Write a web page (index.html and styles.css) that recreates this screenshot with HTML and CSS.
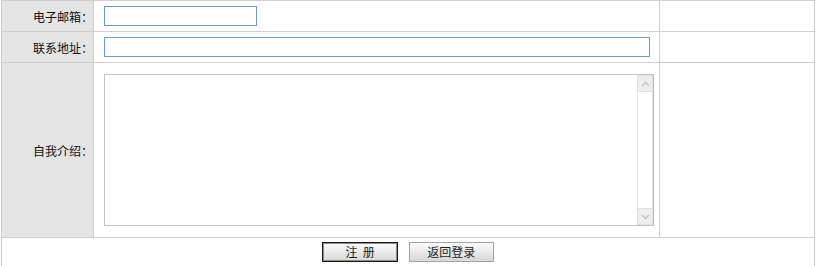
FILE: index.html
```html
<!DOCTYPE html>
<html lang="zh-CN">
<head>
    <meta charset="UTF-8">
    <title>用户注册</title>
    <link rel="stylesheet" href="styles.css">
</head>
<body>

<form class="reg-form" action="#" method="post">
<table class="form-table">
    <colgroup>
        <col class="col-label">
        <col class="col-field">
        <col class="col-tip">
    </colgroup>
    <tr class="row-line">
        <td class="label">电子邮箱：</td>
        <td class="field"><input type="text" class="txt txt-short" name="email"></td>
        <td class="tip"></td>
    </tr>
    <tr class="row-line">
        <td class="label">联系地址：</td>
        <td class="field"><input type="text" class="txt txt-long" name="address" autofocus></td>
        <td class="tip"></td>
    </tr>
    <tr class="row-area">
        <td class="label">自我介绍：</td>
        <td class="field">
            <div class="intro-box">
                <textarea class="intro" name="intro"></textarea>
                <!-- old-style scrollbar look -->
                <div class="intro-bar">
                    <span class="bar-btn">
                        <svg width="9" height="6" viewBox="0 0 9 6"><path d="M1 5 L4.5 1.5 L8 5" fill="none" stroke="#c6c6c6" stroke-width="1.6"/></svg>
                    </span>
                    <span class="bar-btn">
                        <svg width="9" height="6" viewBox="0 0 9 6"><path d="M1 1 L4.5 4.5 L8 1" fill="none" stroke="#c6c6c6" stroke-width="1.6"/></svg>
                    </span>
                </div>
            </div>
        </td>
        <td class="tip"></td>
    </tr>
    <tr class="row-btns">
        <td colspan="3" class="btns">
            <button type="submit" class="btn btn-main">注&nbsp;&nbsp;册</button>
            <button type="button" class="btn">返回登录</button>
        </td>
    </tr>
</table>
</form>

</body>
</html>
```

FILE: styles.css
```css
body {
    margin: 0;
    font-family: "Noto Sans CJK SC", "Liberation Sans", sans-serif;
    font-size: 12px;
    color: #111;
    background: #fff;
}
.form-table {
    width: 814px;
    margin-left: 1px;
    border-collapse: collapse;
    table-layout: fixed;
}
.col-label {
    width: 92px;
}
.col-field {
    width: 566px;
}
.form-table td {
    border: 1px solid #cfcfcf;
    padding: 0;
    vertical-align: middle;
}
.row-line td {
    height: 30px;
}
.row-area td {
    height: 174px;
}
.row-btns td {
    height: 30px;
}
.label {
    background-color: #e4e4e4;
    text-align: right;
    padding-right: 0 !important;
}
.field {
    padding-left: 10px !important;
}
.txt {
    display: block;
    box-sizing: border-box;
    height: 20px;
    margin: 0;
    padding: 1px 2px;
    border: 1px solid #6b9cd4;
    font-family: inherit;
    font-size: 12px;
    outline: none;
}
.txt-short {
    width: 153px;
}
.txt-long {
    width: 546px;
}
.intro-box {
    position: relative;
    width: 550px;
    height: 152px;
}
.intro {
    display: block;
    box-sizing: border-box;
    width: 550px;
    height: 152px;
    margin: 0;
    padding: 2px 20px 2px 2px;
    border: 1px solid #c4c4c4;
    border-right-color: #b8b8b8;
    resize: none;
    overflow: hidden;
    font-family: inherit;
    font-size: 12px;
    outline: none;
}
.intro-bar {
    position: absolute;
    top: 1px;
    right: 1px;
    bottom: 1px;
    width: 16px;
    box-sizing: border-box;
    border-left: 1px solid #e6e6e6;
    border-right: 1px solid #e6e6e6;
    display: flex;
    flex-direction: column;
    justify-content: space-between;
    background: #fff;
}
.bar-btn {
    display: flex;
    align-items: center;
    justify-content: center;
    height: 15px;
    margin: 0 -1px;
    background: #eeeeee;
    border: 1px solid #e0e0e0;
}
.btns {
    text-align: center;
    padding-top: 4px !important;
    vertical-align: top !important;
}
.btn {
    box-sizing: border-box;
    height: 20px;
    width: 85px;
    margin: 0 4px;
    padding: 0;
    border: 1px solid #a5a5a5;
    background: linear-gradient(#fbfbfb, #e6e6e6 60%, #d8d8d8);
    font-family: inherit;
    font-size: 12px;
    line-height: 18px;
    color: #222;
    cursor: pointer;
}
.btn-main {
    width: 76px;
    border-color: #1a1a1a;
    box-shadow: inset 0 0 0 1px #8a8a8a;
}
```
